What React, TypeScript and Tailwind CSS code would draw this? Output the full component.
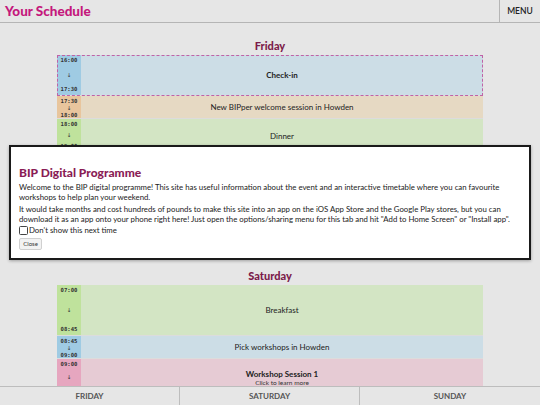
import React from 'react'

type Slot = { start: string; end: string; title: string; sub?: string; bold?: boolean; h: number; tone: 'blue' | 'orange' | 'green' | 'pink'; fav?: boolean }

const tones = {
  blue: { time: 'bg-[#9fcbe3]', body: 'bg-[#ccdde6]' },
  orange: { time: 'bg-[#e8c59d]', body: 'bg-[#e6d9c3]' },
  green: { time: 'bg-[#bfe29c]', body: 'bg-[#d3e5c4]' },
  pink: { time: 'bg-[#e6a6bf]', body: 'bg-[#e6cbd4]' },
}

const friday: Slot[] = [
  { start: '16:00', end: '17:30', title: 'Check-in', bold: true, h: 41, tone: 'blue', fav: true },
  { start: '17:30', end: '18:00', title: 'New BIPper welcome session in Howden', h: 23, tone: 'orange' },
  { start: '18:00', end: '19:00', title: 'Dinner', h: 34, tone: 'green' },
  { start: '19:00', end: '20:30', title: 'Opening ceremony', h: 50, tone: 'blue' },
  { start: '20:30', end: '23:00', title: 'Evening social', h: 50, tone: 'orange' },
]

const saturday: Slot[] = [
  { start: '07:00', end: '08:45', title: 'Breakfast', h: 51, tone: 'green' },
  { start: '08:45', end: '09:00', title: 'Pick workshops in Howden', h: 23, tone: 'blue' },
  { start: '09:00', end: '10:30', title: 'Workshop Session 1', sub: 'Click to learn more', bold: true, h: 38, tone: 'pink' },
  { start: '10:30', end: '11:00', title: 'Break', h: 23, tone: 'orange' },
]

function Row({ s }: { s: Slot }) {
  const t = tones[s.tone]
  return (
    <div className={`flex border-b border-[#dcdcdc] ${s.fav ? 'outline-[1.5px] outline-dashed outline-[#c062a6] -outline-offset-1 relative z-10' : ''}`} style={{ height: s.h }}>
      <div className={`w-[24px] shrink-0 ${t.time} flex flex-col justify-between items-center py-[2px] font-['DejaVu_Sans_Mono',monospace] font-bold text-[5.6px] leading-[7px] text-[#333]`}>
        <span>{s.start}</span>
        <span className="font-['DejaVu_Sans',sans-serif] font-normal">↓</span>
        <span>{s.end}</span>
      </div>
      <div className={`flex-1 ${t.body} flex flex-col items-center justify-center text-[#222]`}>
        <span className={`text-[8px] leading-[10px] ${s.bold ? 'font-bold' : ''}`}>{s.title}</span>
        {s.sub && <span className="text-[6.5px] leading-[7px] text-[#333]">{s.sub}</span>}
      </div>
    </div>
  )
}

function Day({ name, slots }: { name: string; slots: Slot[] }) {
  return (
    <section>
      <h2 className="pt-[16px] pb-[2px] text-center text-[11px] leading-[14px] font-black text-[#7c1c4b]">{name}</h2>
      <div className="mx-[57px] w-[426px]">
        {slots.map((s, i) => <Row key={i} s={s} />)}
      </div>
    </section>
  )
}

export default function App() {
  return (
    <div className="relative h-[405px] w-[540px] overflow-hidden bg-[#e6e6e6] font-['Lato',sans-serif] flex flex-col">
      <header className="h-[23px] shrink-0 flex items-stretch border-b border-[#b5b5b5]">
        <h1 className="flex-1 pl-[5px] flex items-center text-[13.5px] font-black text-[#c4187c]">Your Schedule</h1>
        <button className="w-[41px] border-l border-[#b5b5b5] text-[8.5px] text-[#222] font-semibold">MENU</button>
      </header>
      <main className="flex-1 overflow-hidden">
        <Day name="Friday" slots={friday} />
        <Day name="Saturday" slots={saturday} />
      </main>
      <nav className="h-[19px] shrink-0 grid grid-cols-3 border-t border-[#bdbdbd] text-[8px] leading-[10px] font-bold text-[#555]">
        <button className="border-r border-[#bdbdbd]">FRIDAY</button>
        <button className="border-r border-[#bdbdbd]">SATURDAY</button>
        <button>SUNDAY</button>
      </nav>

      <div className="absolute left-[9px] top-[145px] w-[522px] h-[115px] bg-white border-2 border-[#1a1a1a] shadow-[0_1px_3px_rgba(0,0,0,0.3)] px-[8px] pt-[19px] text-[#222]">
        <h3 className="text-[12px] leading-[14px] font-black text-[#8a1c55] mb-[2px]">BIP Digital Programme</h3>
        <p className="text-[7.8px] leading-[10px] mb-[3px]">Welcome to the BIP digital programme! This site has useful information about the event and an interactive timetable where you can favourite workshops to help plan your weekend.</p>
        <p className="text-[7.8px] leading-[9.5px] mb-[1px]">It would take months and cost hundreds of pounds to make this site into an app on the iOS App Store and the Google Play stores, but you can download it as an app onto your phone right here! Just open the options/sharing menu for this tab and hit "Add to Home Screen" or "Install app".</p>
        <label className="flex items-center text-[7.8px] leading-[11px]">
          <span className="w-[9px] h-[9px] border border-[#444] rounded-[1.5px] mr-[1px] bg-white" />
          Don't show this next time
        </label>
        <button className="block mt-[2px] w-[23px] h-[12px] text-[6px] leading-[8px] text-[#333] bg-[#f2f2f2] border border-[#d0d0d0] rounded-[2px]">Close</button>
      </div>
    </div>
  )
}
